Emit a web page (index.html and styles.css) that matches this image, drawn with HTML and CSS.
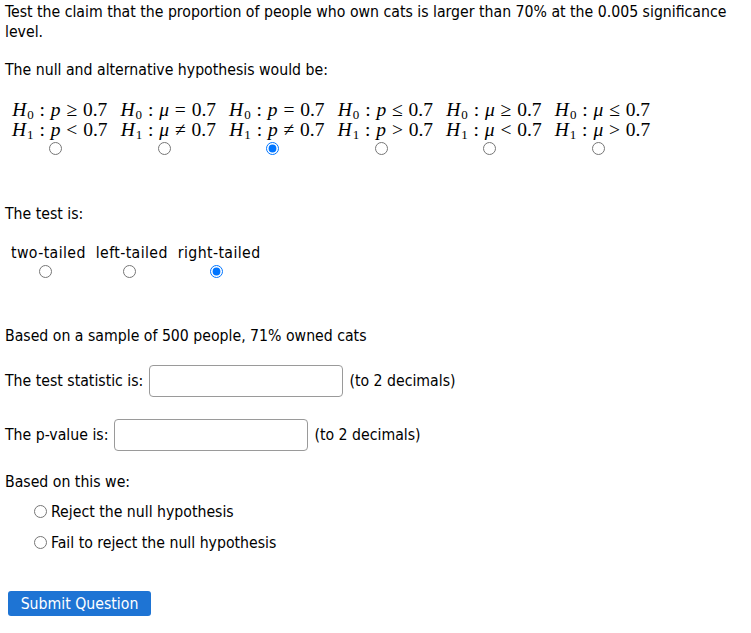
FILE: index.html
```html
<!DOCTYPE html>
<html>
<head>
<meta charset="utf-8">
<link rel="stylesheet" href="styles.css">
</head>
<body>
<div class="page">
  <p class="intro">Test the claim that the proportion of people who own cats is larger than 70% at the 0.005 significance level.</p>
  <p class="lead">The null and alternative hypothesis would be:</p>
  <div class="hyps">
    <label class="hyp">
      <span class="m"><i>H</i><sub>0</sub><b class="r">:</b><i>p</i><b class="r">≥</b>0.7</span>
      <span class="m"><i>H</i><sub>1</sub><b class="r">:</b><i>p</i><b class="r">&lt;</b>0.7</span>
      <input type="radio" name="h">
    </label>
    <label class="hyp">
      <span class="m"><i>H</i><sub>0</sub><b class="r">:</b><i>μ</i><b class="r">=</b>0.7</span>
      <span class="m"><i>H</i><sub>1</sub><b class="r">:</b><i>μ</i><b class="r">≠</b>0.7</span>
      <input type="radio" name="h">
    </label>
    <label class="hyp">
      <span class="m"><i>H</i><sub>0</sub><b class="r">:</b><i>p</i><b class="r">=</b>0.7</span>
      <span class="m"><i>H</i><sub>1</sub><b class="r">:</b><i>p</i><b class="r">≠</b>0.7</span>
      <input type="radio" name="h" checked>
    </label>
    <label class="hyp">
      <span class="m"><i>H</i><sub>0</sub><b class="r">:</b><i>p</i><b class="r">≤</b>0.7</span>
      <span class="m"><i>H</i><sub>1</sub><b class="r">:</b><i>p</i><b class="r">&gt;</b>0.7</span>
      <input type="radio" name="h">
    </label>
    <label class="hyp">
      <span class="m"><i>H</i><sub>0</sub><b class="r">:</b><i>μ</i><b class="r">≥</b>0.7</span>
      <span class="m"><i>H</i><sub>1</sub><b class="r">:</b><i>μ</i><b class="r">&lt;</b>0.7</span>
      <input type="radio" name="h">
    </label>
    <label class="hyp">
      <span class="m"><i>H</i><sub>0</sub><b class="r">:</b><i>μ</i><b class="r">≤</b>0.7</span>
      <span class="m"><i>H</i><sub>1</sub><b class="r">:</b><i>μ</i><b class="r">&gt;</b>0.7</span>
      <input type="radio" name="h">
    </label>
  </div>
  <p class="test-label">The test is:</p>
  <div class="tails">
    <label class="tail"><span>two-tailed</span><input type="radio" name="t"></label>
    <label class="tail"><span>left-tailed</span><input type="radio" name="t"></label>
    <label class="tail"><span>right-tailed</span><input type="radio" name="t" checked></label>
  </div>
  <p class="sample">Based on a sample of 500 people, 71% owned cats</p>
  <div class="field stat">
    <span>The test statistic is:</span>
    <input type="text" class="box">
    <span>(to 2 decimals)</span>
  </div>
  <div class="field pval">
    <span>The p-value is:</span>
    <input type="text" class="box">
    <span>(to 2 decimals)</span>
  </div>
  <p class="conclude">Based on this we:</p>
  <div class="options">
    <label class="opt"><input type="radio" name="c"><span>Reject the null hypothesis</span></label>
    <label class="opt"><input type="radio" name="c"><span>Fail to reject the null hypothesis</span></label>
  </div>
  <button class="submit">Submit Question</button>
</div>
</body>
</html>
```

FILE: styles.css
```css
html, body {
  margin: 0;
  padding: 0;
  background: #fff;
}
body {
  font-family: "DejaVu Sans Condensed", "DejaVu Sans", sans-serif;
  font-stretch: condensed;
  font-size: 15.7px;
  line-height: 19.5px;
  color: #000;
}
.page {
  display: flex;
  flex-direction: column;
  align-items: flex-start;
  padding: 2px 5px 0 5px;
}
p { margin: 0; }
.intro { width: 728px; }
.lead { margin-top: 19px; }

.hyps {
  display: flex;
  gap: 13px;
  margin-top: 20px;
  margin-left: 7px;
}
.hyp {
  display: flex;
  flex-direction: column;
  align-items: center;
}
.m {
  font-family: "Liberation Serif", "DejaVu Serif", serif;
  font-stretch: normal;
  font-size: 19.5px;
  line-height: 20px;
  white-space: nowrap;
}
.m i { font-style: italic; }
.m .r {
  font-weight: normal;
  padding: 0 0.3em;
}
.m sub {
  font-size: 13px;
  vertical-align: -3px;
  line-height: 0;
  margin-left: 1px;
}
.hyp input {
  margin: 2px 8px 0 0;
  width: 13px;
  height: 13px;
}

.test-label { margin-top: 49px; }
.tails {
  display: flex;
  gap: 10px;
  margin-top: 20px;
  margin-left: 6px;
}
.tail {
  display: flex;
  flex-direction: column;
  align-items: center;
  letter-spacing: 0.4px;
}
.tail input {
  margin: 2px 5px 0 0;
  width: 13px;
  height: 13px;
}

.sample { margin-top: 48px; }

.field {
  display: flex;
  align-items: center;
  gap: 6px;
}
.field .box {
  width: 194px;
  height: 32px;
  box-sizing: border-box;
  border: 1px solid #9a9a9a;
  border-radius: 4px;
  margin: 0;
  font: inherit;
}
.stat { margin-top: 20px; }
.pval { margin-top: 22px; }

.conclude { margin-top: 21px; }
.options {
  display: flex;
  flex-direction: column;
  gap: 11px;
  margin-top: 10px;
  margin-left: 29px;
}
.opt {
  display: flex;
  align-items: center;
  gap: 4px;
  line-height: 20px;
}
.opt input {
  margin: 0;
  width: 13px;
  height: 13px;
}

.submit {
  margin-top: 38px;
  margin-left: 3px;
  width: 143px;
  height: 25px;
  background: #1e74d4;
  color: #fff;
  border: none;
  border-radius: 3px;
  font-family: inherit;
  font-stretch: condensed;
  font-size: 15.7px;
  padding: 0;
}
```
